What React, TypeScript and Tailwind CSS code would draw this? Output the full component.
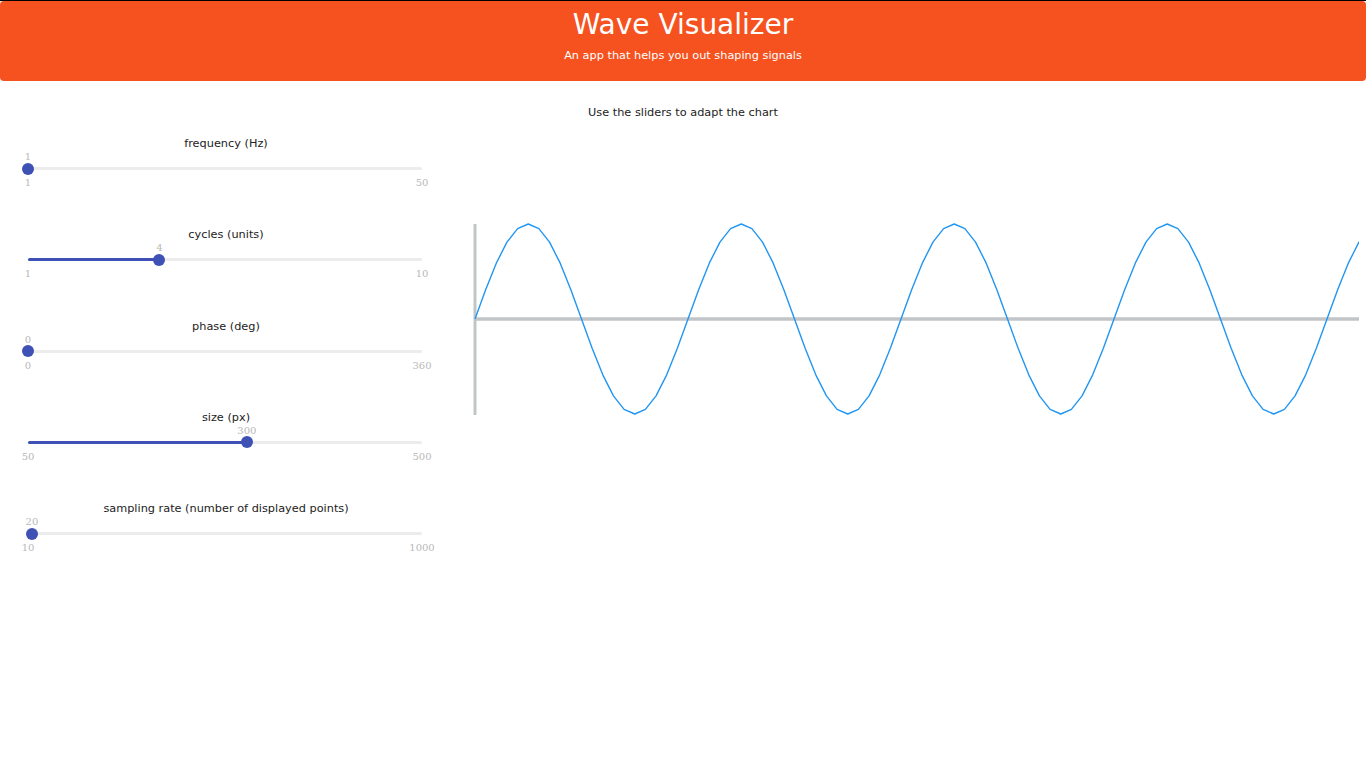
import React from "react";

type S = { title: string; min: number; max: number; value: number };

const sliders: S[] = [
  { title: "frequency (Hz)", min: 1, max: 50, value: 1 },
  { title: "cycles (units)", min: 1, max: 10, value: 4 },
  { title: "phase (deg)", min: 0, max: 360, value: 0 },
  { title: "size (px)", min: 50, max: 500, value: 300 },
  { title: "sampling rate (number of displayed points)", min: 10, max: 1000, value: 20 },
];

const RAIL_W = 394;

function Slider({ s }: { s: S }) {
  const frac = (s.value - s.min) / (s.max - s.min);
  const pos = frac * RAIL_W;
  return (
    <div className="h-[91.3px] flex flex-col items-center">
      <div className="mt-[1px] h-4 leading-4 text-[11.3px] text-[#222]">{s.title}</div>
      <div className="relative h-[40px] w-[394px] ml-[-2px] mt-[-1px]">
        <div className="absolute left-0 right-0 top-[16px] h-[3px] rounded-full bg-[#ececec]" />
        <div
          className="absolute left-0 top-[16px] h-[3px] rounded-full bg-[#3f51b5]"
          style={{ width: pos }}
        />
        <div
          className="absolute top-[11.5px] w-3 h-3 rounded-full bg-[#3f51b5]"
          style={{ left: pos - 6 }}
        />
        <div
          className="absolute top-[1px] w-10 text-center text-[10px] leading-[10px] text-[#b8b8b8]"
          style={{ left: pos - 20, fontFamily: '"DejaVu Serif", serif' }}
        >
          {s.value}
        </div>
        <div
          className="absolute top-[27px] left-[-20px] w-10 text-center text-[10px] leading-[10px] text-[#b8b8b8]"
          style={{ fontFamily: '"DejaVu Serif", serif' }}
        >
          {s.min}
        </div>
        <div
          className="absolute top-[27px] right-[-20px] w-10 text-center text-[10px] leading-[10px] text-[#b8b8b8]"
          style={{ fontFamily: '"DejaVu Serif", serif' }}
        >
          {s.max}
        </div>
      </div>
    </div>
  );
}

function Chart() {
  const ox = 460;
  const oy = 135;
  const x0 = 475 - ox;
  const cy = 319 - oy;
  const period = 213;
  const amp = 95;
  const step = period / 20;
  const pts: string[] = [];
  for (let i = 0; i <= 85; i++) {
    const x = x0 + i * step;
    const y = cy - amp * Math.sin((2 * Math.PI * (i * step)) / period);
    pts.push(`${x.toFixed(2)},${y.toFixed(2)}`);
  }
  return (
    <svg width={906} height={300} className="block">
      <defs>
        <clipPath id="clip">
          <rect x={0} y={0} width={1359 - ox} height={300} />
        </clipPath>
      </defs>
      <line x1={x0} y1={224 - oy} x2={x0} y2={415 - oy} stroke="#c2c5c8" strokeWidth={3} />
      <line x1={x0} y1={cy} x2={1359 - ox} y2={cy} stroke="#c2c5c8" strokeWidth={3.5} />
      <polyline
        points={pts.join(" ")}
        fill="none"
        stroke="#2196f3"
        strokeWidth={1.4}
        strokeLinejoin="round"
        clipPath="url(#clip)"
      />
    </svg>
  );
}

export default function App() {
  return (
    <div
      className="w-[1366px] min-h-[768px] bg-white"
      style={{ fontFamily: '"DejaVu Sans", Verdana, sans-serif' }}
    >
      <div className="border-t border-black">
        <header className="h-[80px] rounded-[4px] bg-[#f5521f] flex flex-col items-center text-white">
          <h1 className="mt-[7px] text-[28px] leading-[34px] font-normal">Wave Visualizer</h1>
          <p className="mt-[7px] text-[11.3px] leading-[14px]">
            An app that helps you out shaping signals
          </p>
        </header>
      </div>
      <p className="mt-[24px] text-center text-[11.3px] leading-4 text-[#222]">
        Use the sliders to adapt the chart
      </p>
      <div className="mt-[14px] flex">
        <div className="w-[452px] flex flex-col">
          {sliders.map((s) => (
            <Slider key={s.title} s={s} />
          ))}
        </div>
        <div className="ml-[8px]">
          <Chart />
        </div>
      </div>
    </div>
  );
}
